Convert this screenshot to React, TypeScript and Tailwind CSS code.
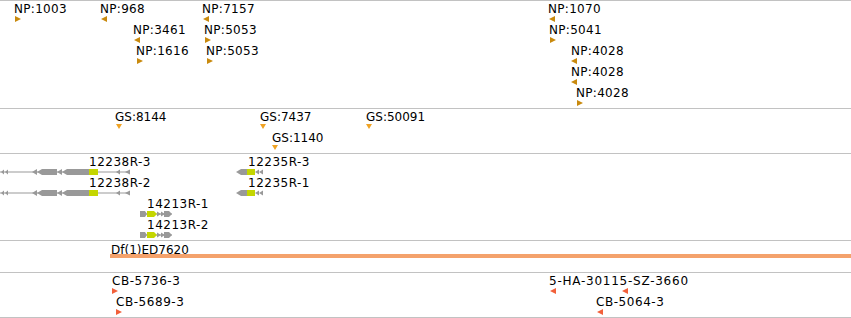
import React from 'react';

type Dir = 'l' | 'r' | 'd';

const GRAY = '#999999';
const LIME = '#c4d600';

const Tri: React.FC<{ dir: Dir; color: string; cls: string }> = ({ dir, color, cls }) => {
  const pts = dir === 'r' ? '0,0 6,3 0,6' : dir === 'l' ? '6,0 0,3 6,6' : '0,0 6,0 3,5';
  return (
    <svg className={`absolute ${cls}`} width={6} height={6} viewBox="0 0 6 6">
      <polygon points={pts} fill={color} />
    </svg>
  );
};

const Label: React.FC<{ text: string; cls: string }> = ({ text, cls }) => (
  <span className={`absolute whitespace-nowrap leading-[14px] ${cls}`}>{text}</span>
);

type Feature = { label: string; lbl: string; tris: { dir: Dir; cls: string }[] };

const proteins: Feature[] = [
  { label: 'NP:1003', lbl: 'left-[14px] top-[1px]', tris: [{ dir: 'r', cls: 'left-[15px] top-[15px]' }] },
  { label: 'NP:968', lbl: 'left-[100px] top-[1px]', tris: [{ dir: 'l', cls: 'left-[101px] top-[15px]' }] },
  { label: 'NP:7157', lbl: 'left-[202px] top-[1px]', tris: [{ dir: 'l', cls: 'left-[203px] top-[15px]' }] },
  { label: 'NP:3461', lbl: 'left-[133px] top-[22px]', tris: [{ dir: 'l', cls: 'left-[134px] top-[36px]' }] },
  { label: 'NP:5053', lbl: 'left-[204px] top-[22px]', tris: [{ dir: 'r', cls: 'left-[205px] top-[36px]' }] },
  { label: 'NP:1616', lbl: 'left-[136px] top-[43px]', tris: [{ dir: 'r', cls: 'left-[137px] top-[57px]' }] },
  { label: 'NP:5053', lbl: 'left-[206px] top-[43px]', tris: [{ dir: 'r', cls: 'left-[207px] top-[57px]' }] },
  { label: 'NP:1070', lbl: 'left-[548px] top-[1px]', tris: [{ dir: 'l', cls: 'left-[549px] top-[15px]' }] },
  { label: 'NP:5041', lbl: 'left-[549px] top-[22px]', tris: [{ dir: 'r', cls: 'left-[550px] top-[36px]' }] },
  { label: 'NP:4028', lbl: 'left-[571px] top-[43px]', tris: [{ dir: 'l', cls: 'left-[571px] top-[57px]' }] },
  { label: 'NP:4028', lbl: 'left-[571px] top-[64px]', tris: [{ dir: 'l', cls: 'left-[571px] top-[78px]' }] },
  { label: 'NP:4028', lbl: 'left-[576px] top-[85px]', tris: [{ dir: 'r', cls: 'left-[577px] top-[99px]' }] },
];

const gs: Feature[] = [
  { label: 'GS:8144', lbl: 'left-[115px] top-[1px]', tris: [{ dir: 'd', cls: 'left-[116px] top-[15px]' }] },
  { label: 'GS:7437', lbl: 'left-[260px] top-[1px]', tris: [{ dir: 'd', cls: 'left-[260px] top-[15px]' }] },
  { label: 'GS:50091', lbl: 'left-[366px] top-[1px]', tris: [{ dir: 'd', cls: 'left-[366px] top-[15px]' }] },
  { label: 'GS:1140', lbl: 'left-[272px] top-[22px]', tris: [{ dir: 'd', cls: 'left-[272px] top-[36px]' }] },
];

const reagents: Feature[] = [
  { label: 'CB-5736-3', lbl: 'left-[112px] top-[1px] tracking-[0.55px]', tris: [{ dir: 'r', cls: 'left-[112px] top-[15px]' }] },
  { label: 'CB-5689-3', lbl: 'left-[116px] top-[22px] tracking-[0.55px]', tris: [{ dir: 'r', cls: 'left-[116px] top-[36px]' }] },
  {
    label: '5-HA-30115-SZ-3660',
    lbl: 'left-[549px] top-[1px] tracking-[0.75px]',
    tris: [
      { dir: 'l', cls: 'left-[550px] top-[15px]' },
      { dir: 'l', cls: 'left-[622px] top-[15px]' },
    ],
  },
  { label: 'CB-5064-3', lbl: 'left-[596px] top-[22px] tracking-[0.55px]', tris: [{ dir: 'l', cls: 'left-[597px] top-[36px]' }] },
];

// minus strand transcript, long
const Gene12238: React.FC<{ cls: string }> = ({ cls }) => (
  <svg className={`absolute ${cls}`} width={135} height={6}>
    <rect x={0} y={2.5} width={130} height={1} fill={GRAY} />
    <polygon points="1,3 4,0.5 4,5.5" fill={GRAY} />
    <polygon points="5,3 8,0.5 8,5.5" fill={GRAY} />
    <polygon points="32,3 37,0 37,6" fill={GRAY} />
    <polygon points="37,3 42,0 57,0 57,6 42,6" fill={GRAY} />
    <polygon points="57,3 62,0 62,6" fill={GRAY} />
    <polygon points="62,3 67,0 89,0 89,6 67,6" fill={GRAY} />
    <rect x={89} y={0} width={9} height={6} fill={LIME} />
    <polygon points="116,3 120,0.5 120,5.5" fill={GRAY} />
    <polygon points="125,3 130,0.5 130,5.5" fill={GRAY} />
  </svg>
);

const Gene12235: React.FC<{ cls: string }> = ({ cls }) => (
  <svg className={`absolute ${cls}`} width={28} height={6}>
    <polygon points="0,3 5,0 12,0 12,6 5,6" fill={GRAY} />
    <rect x={11} y={0} width={8} height={6} fill={LIME} />
    <polygon points="19,3 23,0.5 23,5.5" fill={GRAY} />
    <polygon points="23,3 27,0.5 27,5.5" fill={GRAY} />
  </svg>
);

const Gene14213: React.FC<{ cls: string }> = ({ cls }) => (
  <svg className={`absolute ${cls}`} width={33} height={6}>
    <rect x={0} y={2.5} width={32} height={1} fill={GRAY} />
    <polygon points="0,0 5,0 7,3 5,6 0,6" fill={GRAY} />
    <polygon points="7,0 14,0 17,3 14,6 7,6" fill={LIME} />
    <polygon points="17,0.5 21,3 17,5.5" fill={GRAY} />
    <polygon points="21,0.5 25,3 21,5.5" fill={GRAY} />
    <polygon points="24,0 29,0 32,3 29,6 24,6" fill={GRAY} />
  </svg>
);

const FeatureSet: React.FC<{ items: Feature[]; color: string; tracking?: string }> = ({ items, color, tracking = '' }) => (
  <>
    {items.map((f, i) => (
      <React.Fragment key={i}>
        <Label text={f.label} cls={`${f.lbl} ${tracking}`} />
        {f.tris.map((t, j) => (
          <Tri key={j} dir={t.dir} color={color} cls={t.cls} />
        ))}
      </React.Fragment>
    ))}
  </>
);

export default function App() {
  return (
    <div className="w-[851px] h-[318px] overflow-hidden bg-white text-[12px] text-black font-['DejaVu_Sans',sans-serif]">
      {/* proteins */}
      <div className="relative h-[108px] border-t border-[#c2c2c2]">
        <FeatureSet items={proteins} color="#c98a0e" tracking="tracking-[0.3px]" />
      </div>

      {/* gene symbols */}
      <div className="relative h-[45px] border-t border-[#c2c2c2]">
        <FeatureSet items={gs} color="#f0a324" />
      </div>

      {/* transcripts */}
      <div className="relative h-[87px] border-t border-[#c2c2c2]">
        <Label text="12238R-3" cls="left-[89px] top-[1px] tracking-[0.5px]" />
        <Gene12238 cls="left-[0px] top-[15px]" />
        <Label text="12238R-2" cls="left-[89px] top-[22px] tracking-[0.5px]" />
        <Gene12238 cls="left-[0px] top-[36px]" />

        <Label text="12235R-3" cls="left-[248px] top-[1px] tracking-[0.5px]" />
        <Gene12235 cls="left-[236px] top-[15px]" />
        <Label text="12235R-1" cls="left-[248px] top-[22px] tracking-[0.5px]" />
        <Gene12235 cls="left-[236px] top-[36px]" />

        <Label text="14213R-1" cls="left-[147px] top-[43px] tracking-[0.5px]" />
        <Gene14213 cls="left-[140px] top-[57px]" />
        <Label text="14213R-2" cls="left-[147px] top-[64px] tracking-[0.5px]" />
        <Gene14213 cls="left-[140px] top-[78px]" />
      </div>

      {/* deficiency */}
      <div className="relative h-[32px] border-t border-[#c2c2c2]">
        <Label text="Df(1)ED7620" cls="left-[111px] top-[1.5px]" />
        <div className="absolute left-[110px] right-0 top-[13px] h-[4px] bg-[#f4a26c]" />
      </div>

      {/* reagents */}
      <div className="relative h-[46px] border-y border-[#c2c2c2]">
        <FeatureSet items={reagents} color="#f2603a" />
      </div>
    </div>
  );
}
